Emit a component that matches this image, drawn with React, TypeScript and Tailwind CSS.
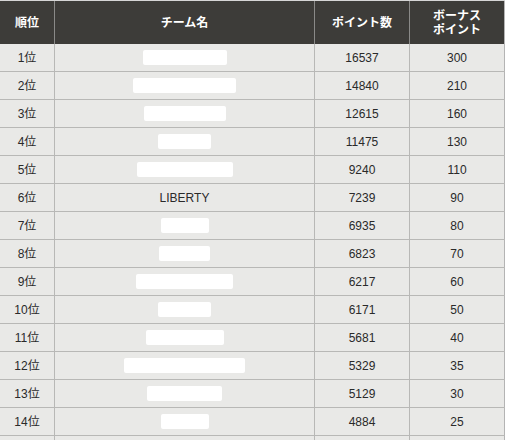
const rows = [
  { rank: "1位", name: null, blot: 84, points: 16537, bonus: 300 },
  { rank: "2位", name: null, blot: 103, points: 14840, bonus: 210 },
  { rank: "3位", name: null, blot: 82, points: 12615, bonus: 160 },
  { rank: "4位", name: null, blot: 53, points: 11475, bonus: 130 },
  { rank: "5位", name: null, blot: 96, points: 9240, bonus: 110 },
  { rank: "6位", name: "LIBERTY", blot: 0, points: 7239, bonus: 90 },
  { rank: "7位", name: null, blot: 48, points: 6935, bonus: 80 },
  { rank: "8位", name: null, blot: 51, points: 6823, bonus: 70 },
  { rank: "9位", name: null, blot: 97, points: 6217, bonus: 60 },
  { rank: "10位", name: null, blot: 53, points: 6171, bonus: 50 },
  { rank: "11位", name: null, blot: 78, points: 5681, bonus: 40 },
  { rank: "12位", name: null, blot: 121, points: 5329, bonus: 35 },
  { rank: "13位", name: null, blot: 75, points: 5129, bonus: 30 },
  { rank: "14位", name: null, blot: 48, points: 4884, bonus: 25 },
];

const font = "font-['Liberation_Sans','Noto_Sans_CJK_JP',sans-serif]";
const cols = "grid grid-cols-[55px_260px_95px_95px]";

export default function App() {
  return (
    <div className={`w-[513px] h-[440px] overflow-hidden bg-white ${font}`}>
      <div className="w-[505px] border-t border-[#d6d6d6]">
        {/* header */}
        <div className={`${cols} h-[43px] bg-[#3d3c39] text-white text-[12px] font-bold leading-[14px]`}>
          <div className="flex items-center justify-center border-r border-[#8a8a88]">順位</div>
          <div className="flex items-center justify-center border-r border-[#8a8a88]">チーム名</div>
          <div className="flex items-center justify-center border-r border-[#8a8a88]">ポイント数</div>
          <div className="flex flex-col items-center justify-center border-r border-[#b4b4b4]">
            <span>ボーナス</span>
            <span>ポイント</span>
          </div>
        </div>

        {/* rows */}
        {rows.map((r) => (
          <div
            key={r.rank}
            className={`${cols} h-[28px] bg-[#e9e9e7] border-b border-[#b8b8b6] text-[12px] text-[#2a2a2a]`}
          >
            <div className="flex items-center justify-center border-r border-[#b8b8b6]">{r.rank}</div>
            <div className="flex items-center justify-center border-r border-[#b8b8b6]">
              {r.name ? (
                <span>{r.name}</span>
              ) : (
                <div className="h-[15px] bg-white rounded-[2px] blur-[0.6px]" style={{ width: r.blot }} />
              )}
            </div>
            <div className="flex items-center justify-center border-r border-[#b8b8b6]">{r.points}</div>
            <div className="flex items-center justify-center border-r border-[#b4b4b4]">{r.bonus}</div>
          </div>
        ))}

        {/* next row, cut off by the window */}
        <div className={`${cols} h-[28px] bg-[#e9e9e7]`}>
          <div className="border-r border-[#b8b8b6]" />
          <div className="border-r border-[#b8b8b6]" />
          <div className="border-r border-[#b8b8b6]" />
          <div className="border-r border-[#b4b4b4]" />
        </div>
      </div>
    </div>
  );
}
